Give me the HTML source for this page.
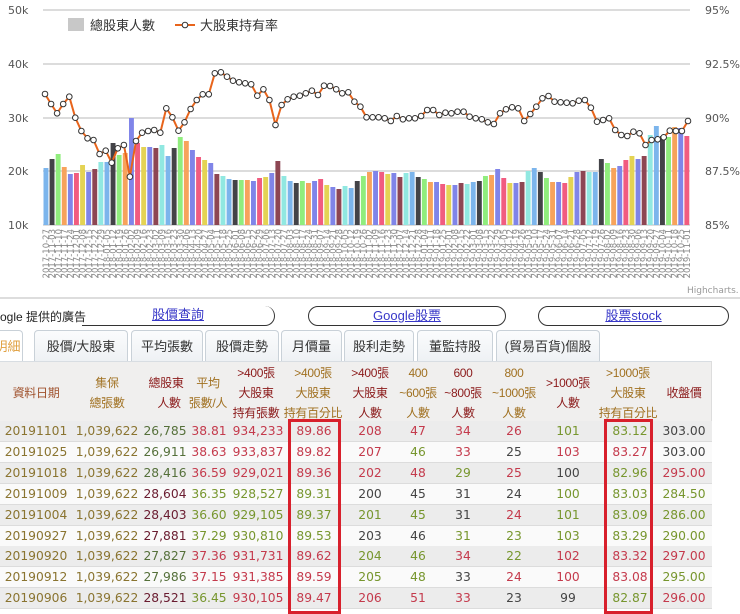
<!DOCTYPE html>
<html><head><meta charset="utf-8">
<style>
body{margin:0;width:740px;height:609px;overflow:hidden;background:#fff;font-family:"Liberation Sans","Noto Sans CJK TC",sans-serif;position:relative}
.a{position:absolute}
.tab{position:absolute;top:330px;height:31px;border:1px solid #c9d1d8;border-bottom:none;border-radius:4px 4px 0 0;background:linear-gradient(#fbfcfd,#eef1f4);font-size:13px;color:#333;text-align:center;line-height:32px;box-sizing:border-box}
.btn{position:absolute;top:306px;height:20px;border:1px solid #333;border-radius:10px;box-sizing:border-box;text-align:center;font-size:13px;line-height:18px;color:#3838c8}
.h{position:absolute;width:70px;text-align:center;font-size:12px;line-height:20px;letter-spacing:-0.3px}
.c{position:absolute;width:64px;text-align:center;font-family:"DejaVu Sans",sans-serif;font-size:12.3px;line-height:21px}
.row{position:absolute;left:0;width:712px;height:21px;border-bottom:1px solid #dcdcdc;box-sizing:border-box}
.o{color:#8a7430}.g{color:#77962e}.r{color:#c43a4c}.k{color:#444}.d{color:#6a1c30}.gd{color:#55703a}
.box{position:absolute;border:3px solid #d8202c;box-sizing:border-box}
</style></head><body>
<svg id="ch" class="a" style="left:0;top:0" width="740" height="300"></svg>

<div class="a" style="left:0;top:308px;font-size:12px;color:#222">ogle 提供的廣告</div>
<div class="btn" style="left:82px;width:193px;border-left:none;border-radius:0 10px 10px 0;border-top:none"><u>股價查詢</u></div>
<div class="btn" style="left:308px;width:198px"><u>Google股票</u></div>
<div class="btn" style="left:538px;width:191px"><u>股票stock</u></div>

<div class="tab" style="left:-8px;width:31px;color:#e0a040;background:#fff">明細</div>
<div class="tab" style="left:34px;width:94px">股價/大股東</div>
<div class="tab" style="left:131px;width:72px">平均張數</div>
<div class="tab" style="left:205px;width:74px">股價走勢</div>
<div class="tab" style="left:281px;width:61px">月價量</div>
<div class="tab" style="left:344px;width:70px">股利走勢</div>
<div class="tab" style="left:417px;width:76px">董監持股</div>
<div class="tab" style="left:496px;width:104px">(貿易百貨)個股</div>

<div class="a" style="left:0;top:361px;width:712px;height:60px;background:#f0efee;border-top:1px solid #d8dde2"></div>
<div class="a" style="left:711px;top:361px;width:1px;height:248px;background:#ddd"></div>
<div class="h" style="left:1px;top:383px;color:#a0522d">資料日期</div>
<div class="h" style="left:72px;top:373px;color:#a07020">集保<br>總張數</div>
<div class="h" style="left:131px;top:373px;color:#8b1a1a">總股東<br>&nbsp;&nbsp;人數</div>
<div class="h" style="left:173px;top:373px;color:#a07020">平均<br>張數/人</div>
<div class="h" style="left:221px;top:363px;color:#8b1a1a">&gt;400張<br>大股東<br>持有張數</div>
<div class="h" style="left:278px;top:363px;color:#a07020">&gt;400張<br>大股東<br>持有百分比</div>
<div class="h" style="left:335px;top:363px;color:#8b1a1a">&gt;400張<br>大股東<br>人數</div>
<div class="h" style="left:383px;top:363px;color:#a07020">400<br>~600張<br>人數</div>
<div class="h" style="left:428px;top:363px;color:#8b1a1a">600<br>~800張<br>人數</div>
<div class="h" style="left:479px;top:363px;color:#a07020">800<br>~1000張<br>人數</div>
<div class="h" style="left:533px;top:373px;color:#8b1a1a">&gt;1000張<br>人數</div>
<div class="h" style="left:593px;top:363px;color:#a07020">&gt;1000張<br>大股東<br>持有百分比</div>
<div class="h" style="left:649px;top:383px;color:#8b1a1a">收盤價</div>

<div id="tb"></div>
<div class="box" style="left:288px;top:419px;width:53px;height:195px"></div>
<div class="box" style="left:604px;top:419px;width:49px;height:195px"></div>

<script>
var s='';
var grid=[[10,'50k','95%'],[64,'40k','92.5%'],[118,'30k','90%'],[171,'20k','87.5%'],[225,'10k','85%']];
grid.forEach(function(g){s+='<line x1="43" x2="690" y1="'+g[0]+'" y2="'+g[0]+'" stroke="#d0d0d0" stroke-width="1.5"/>';
s+='<text x="8" y="'+(g[0]+4)+'" font-size="11" fill="#555" font-family="DejaVu Sans">'+g[1]+'</text>';
s+='<text x="705" y="'+(g[0]+4)+'" font-size="11" fill="#555" font-family="DejaVu Sans">'+g[2]+'</text>';});
var bars=[168,159,154,167,174,173,165,172,169,162,162,143,155,153,118,143,147,147,148,145,156,148,137,141,150,157,160,163,174,176,179,180,180,180,181,178,177,173,161,176,181,183,181,183,181,179,185,187,189,186,188,181,176,172,171,172,174,173,177,173,172,177,179,182,182,184,185,185,183,184,182,181,176,175,169,178,183,183,182,171,168,172,178,182,182,183,177,172,171,172,172,159,163,168,166,160,156,159,156,135,126,136,137,127,128,136];
var cols=['#7cb5ec','#434348','#90ed7d','#f7a35c','#8085e9','#f15c80','#e4d354','#8085e8','#8d4653','#91e8e1'];
var N=bars.length,p=647/N;
var d=new Date(2019,10,1),dates=[];
for(var i=0;i<N;i++){dates.unshift(d.getFullYear()+'-'+('0'+(d.getMonth()+1)).slice(-2)+'-'+('0'+d.getDate()).slice(-2));d=new Date(d.getTime()-7*864e5);}
for(i=0;i<N;i++){var x=43+i*p;s+='<rect x="'+(x+0.5).toFixed(1)+'" y="'+bars[i]+'" width="'+(p-1.2).toFixed(1)+'" height="'+(225-bars[i])+'" fill="'+cols[i%10]+'"/>';
s+='<text transform="translate('+(x+p/2+3).toFixed(1)+',229) rotate(-90)" text-anchor="end" font-size="8.5" fill="#888" font-family="DejaVu Sans">'+dates[i]+'</text>';}
var lz=[102,132,160,132,110,173,213,235,240,282,272,308,265,255,350,243,218,213,210,218,145,172,212,187,147,120,103,103,40,37,50,62,67,70,73,107,88,120,195,135,118,110,107,100,92,105,77,78,88,100,97,125,140,172,172,172,175,183,168,178,175,175,168,150,150,165,158,160,155,155,170,175,178,187,192,160,148,142,145,183,162,140,115,108,125,127,128,130,122,120,143,185,180,175,210,225,228,215,220,255,240,238,232,212,213,213,183];
var M=lz.length,q=(688-45)/(M-1),pts=[];
for(i=0;i<M;i++)pts.push((45+i*q).toFixed(1)+','+(60+lz[i]/3).toFixed(1));
s+='<polyline points="'+pts.join(' ')+'" fill="none" stroke="#e8641b" stroke-width="2"/>';
pts.forEach(function(pt){var a=pt.split(',');s+='<circle cx="'+a[0]+'" cy="'+a[1]+'" r="2.8" fill="#fff" stroke="#333" stroke-width="1"/>';});
s+='<rect x="68" y="18" width="16" height="13" fill="#c8c8c8"/><text x="90" y="30" font-size="13" fill="#333" font-family="Noto Sans CJK TC">總股東人數</text>';
s+='<line x1="175" x2="195" y1="25" y2="25" stroke="#e8641b" stroke-width="2"/><circle cx="185" cy="25" r="2.8" fill="#fff" stroke="#333"/><text x="200" y="30" font-size="13" fill="#333" font-family="Noto Sans CJK TC">大股東持有率</text>';
s+='<text x="687" y="293" font-size="9" fill="#999" font-family="DejaVu Sans">Highcharts.</text>';
s+='<line x1="0" x2="740" y1="298" y2="298" stroke="#ddd" stroke-width="2"/>';
document.getElementById('ch').innerHTML=s;
var cx=[36,107,165,209,258,314,370,418,463,514,568,630,684];
var R=[
['20191101 o','1,039,622 o','26,785 gd','38.81 r','934,233 r','89.86 r','208 r','47 r','34 r','26 r','101 g','83.12 g','303.00 k'],
['20191025 o','1,039,622 o','26,911 gd','38.63 r','933,837 r','89.82 r','207 r','46 g','33 r','25 k','103 r','83.27 r','303.00 k'],
['20191018 o','1,039,622 o','28,416 gd','36.59 r','929,021 r','89.36 r','202 r','48 r','29 g','25 r','100 k','82.96 g','295.00 r'],
['20191009 o','1,039,622 o','28,604 d','36.35 g','928,527 g','89.31 g','200 k','45 k','31 k','24 k','100 g','83.03 g','284.50 g'],
['20191004 o','1,039,622 o','28,403 d','36.60 g','929,105 g','89.37 g','201 g','45 g','31 k','24 r','101 g','83.09 g','286.00 g'],
['20190927 o','1,039,622 o','27,881 d','37.29 g','930,810 g','89.53 g','203 k','46 k','31 g','23 g','103 g','83.29 g','290.00 g'],
['20190920 o','1,039,622 o','27,827 gd','37.36 r','931,731 r','89.62 r','204 g','46 g','34 r','22 g','102 r','83.32 r','297.00 r'],
['20190912 o','1,039,622 o','27,986 gd','37.15 r','931,385 r','89.59 r','205 g','48 g','33 k','24 r','100 r','83.08 r','295.00 g'],
['20190906 o','1,039,622 o','28,521 d','36.45 g','930,105 r','89.47 r','206 r','51 r','33 r','23 k','99 k','82.87 g','296.00 r']];
var h='';
R.forEach(function(r,j){var y=(421+j*20.9).toFixed(1);
h+='<div class="row" style="top:'+y+'px;background:'+(j%2?'#fafafa':'#ececec')+'"></div>';
r.forEach(function(c,k){var t=c.split(' ');h+='<div class="c '+t[1]+'" style="left:'+(cx[k]-32)+'px;top:'+y+'px">'+t[0]+'</div>';});});
document.getElementById('tb').innerHTML=h;
</script>
</body></html>
